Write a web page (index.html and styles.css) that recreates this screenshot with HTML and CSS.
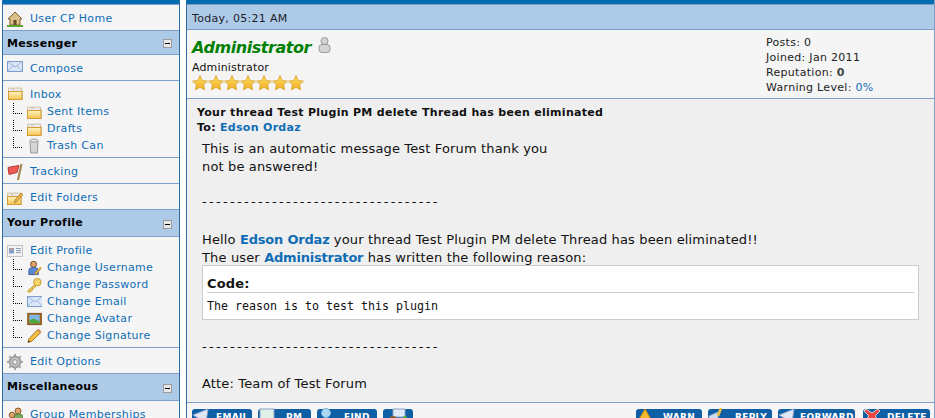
FILE: index.html
```html
<!DOCTYPE html>
<html lang="en">
<head>
<meta charset="utf-8">
<title>Private Message</title>
<link rel="stylesheet" href="styles.css">
</head>
<body>
<svg class="defs" width="0" height="0" aria-hidden="true">
  <defs>
    <linearGradient id="fg" x1="0" y1="0" x2="0" y2="1"><stop offset="0" stop-color="#fdf3c4"/><stop offset="1" stop-color="#f5c54e"/></linearGradient>
    <linearGradient id="sg" x1="0" y1="0" x2="0" y2="1"><stop offset="0" stop-color="#fbdc66"/><stop offset="1" stop-color="#eeb021"/></linearGradient>
    <symbol id="folder" viewBox="0 0 15 13">
      <path d="M.5 1.500v11h14v-9h-1v-2.500h-8v1.500h-1v-1.500h-4z" fill="#e9e9e9" stroke="#c6b68c" stroke-width=".7"/>
      <rect x=".5" y="4.500" width="13.500" height="8" fill="url(#fg)" stroke="#d59c35"/>
    </symbol>
    <symbol id="mail" viewBox="0 0 16 11">
      <rect x=".5" y=".5" width="15" height="10" fill="#dbe7f8" stroke="#7d9cc9"/>
      <path d="M.5.500l7.500 5.500 7.500-5.500M.5 10.500l5.500-6M15.500 10.500l-5.500-6" fill="none" stroke="#9db6dc"/>
    </symbol>
    <symbol id="star" viewBox="0 0 16 16">
      <path d="M8 .5l2.300 5 5.200.6-3.900 3.600 1.100 5.300-4.700-2.700-4.700 2.700 1.100-5.300-3.900-3.600 5.200-.6z" fill="url(#sg)" stroke="#d9a52e" stroke-width=".8"/>
    </symbol>
  </defs>
</svg>
<div class="page">
  <nav class="side">
    <div class="capbar"></div>
    <div class="group">
      <a class="row"><svg class="ico" viewBox="0 0 16 16"><path d="M1 8l7-7 7 7h-2v6h-10v-6z" fill="#d9c08a" stroke="#8a5a2b"/><path d="M6.500 9h3v5h-3z" fill="#6b4a26"/><path d="M0 14h16v2h-16z" fill="#5da33c"/></svg>User CP Home</a>
    </div>
    <h2 class="head">Messenger<span class="toggle"></span></h2>
    <div class="group"><a class="row"><svg class="ico"><use href="#mail" width="16" height="11" y="0"/></svg>Compose</a></div>
    <div class="group tree">
      <a class="row"><svg class="ico"><use href="#folder" width="15" height="13" x="1" y="0"/></svg>Inbox</a>
      <a class="sub"><span class="dots"></span><svg class="ico"><use href="#folder" width="15" height="13" y="2"/></svg>Sent Items</a>
      <a class="sub"><span class="dots"></span><svg class="ico"><use href="#folder" width="15" height="13" y="2"/></svg>Drafts</a>
      <a class="sub"><span class="dots"></span><svg class="ico" viewBox="0 0 15 16"><path d="M3 2.500h8l-.6 12.500h-6.800z" fill="#d5d5d5" stroke="#9a9a9a"/><ellipse cx="7" cy="2.500" rx="4" ry="1.500" fill="#eee" stroke="#9a9a9a"/></svg>Trash Can</a>
    </div>
    <div class="group"><a class="row"><svg class="ico" viewBox="0 0 16 16"><path d="M1 3.500l5-1 6-1-2 7-8 2z" fill="#ee5a55" stroke="#b53a36"/><path d="M14.500 0l-3.500 16" stroke="#a8834c" stroke-width="2"/></svg>Tracking</a></div>
    <div class="group"><a class="row"><svg class="ico" viewBox="0 0 16 16"><use href="#folder" width="15" height="13" y="2"/><path d="M7 13l1-3 6-7 2 1.500-6 7z" fill="#e9b53f" stroke="#a9762a" stroke-width=".7"/></svg>Edit Folders</a></div>
    <h2 class="head tall">Your Profile<span class="toggle"></span></h2>
    <div class="group tree">
      <a class="row"><svg class="ico" viewBox="0 0 16 16"><rect x=".5" y="2.500" width="15" height="11" fill="#f2f2f2" stroke="#c4c4c4"/><rect x="2" y="5" width="5" height="5.500" fill="#7f9fd6"/><circle cx="4.500" cy="6.500" r="1.300" fill="#d99a66"/><path d="M9 5.500h5M9 7.500h5M9 9.500h5" stroke="#8b9fbd"/></svg>Edit Profile</a>
      <a class="sub"><span class="dots"></span><svg class="ico" viewBox="0 0 16 16"><circle cx="7" cy="4" r="3.200" fill="#e2a56f" stroke="#6d3f1c"/><path d="M2 15v-4.500q0-3 5-3t5 3v4.500z" fill="#5a8ad0" stroke="#345d9c"/><path d="M8 14l6-7 1.500 1.200-6 7z" fill="#f0c040" stroke="#a9762a" stroke-width=".6"/></svg>Change Username</a>
      <a class="sub"><span class="dots"></span><svg class="ico" viewBox="0 0 16 16"><circle cx="11" cy="5" r="4" fill="#f6d567" stroke="#c39a2c"/><path d="M8 8l-7 6v1.500h3v-2h2v-2h1.500l2-2.500z" fill="#f3cd57" stroke="#c39a2c"/></svg>Change Password</a>
      <a class="sub"><span class="dots"></span><svg class="ico"><use href="#mail" width="16" height="11" y="2"/></svg>Change Email</a>
      <a class="sub"><span class="dots"></span><svg class="ico" viewBox="0 0 16 16"><rect x=".8" y="2" width="14.500" height="12" fill="#a56a22" stroke="#7d4e14"/><rect x="2.500" y="3.500" width="11" height="9" fill="#7fb7e6"/><path d="M2.500 12.500v-3l4-2 7 3v2z" fill="#4fa83e"/></svg>Change Avatar</a>
      <a class="sub"><span class="dots"></span><svg class="ico" viewBox="0 0 16 16"><path d="M1 15l1-4 9-9.500 3.500 3-9.500 9z" fill="#f2c23f" stroke="#a3702a"/><path d="M1 15l.7-2.600 1.900 1.700z" fill="#5b3c1e"/><path d="M11 1.500l3.500 3 1-1.200-3.300-3z" fill="#e6806a"/></svg>Change Signature</a>
    </div>
    <div class="group"><a class="row"><svg class="ico" viewBox="0 0 16 16"><circle cx="8" cy="8" r="5.500" fill="#c4c4c4" stroke="#939393" stroke-width="1.500"/><circle cx="8" cy="8" r="2.300" fill="#f2f2f2" stroke="#8a8a8a"/><path d="M8 0v3M8 13v3M0 8h3M13 8h3M2.300 2.300l2.100 2.100M11.600 11.600l2.100 2.100M2.300 13.700l2.100-2.100M11.600 4.400l2.100-2.100" stroke="#a3a3a3" stroke-width="2"/></svg>Edit Options</a></div>
    <h2 class="head tall">Miscellaneous<span class="toggle"></span></h2>
    <div class="group"><a class="row"><svg class="ico" viewBox="0 0 16 16"><circle cx="11" cy="4" r="3" fill="#e2a56f" stroke="#8a5a2b"/><path d="M6 13v-3q0-3 5-3t5 3v3z" fill="#79a860" stroke="#4e7a39"/><circle cx="5" cy="8" r="2.800" fill="#e2a56f" stroke="#8a5a2b"/><path d="M0 16v-1q0-4 5-4t5 4v1z" fill="#b06a5a"/></svg>Group Memberships</a></div>
  </nav>

  <main class="main">
    <div class="capbar"></div>
    <div class="date">Today, 05:21 AM</div>
    <header class="author">
      <div class="who">
        <div class="name">Administrator<svg class="status" viewBox="0 0 13 16"><circle cx="6.500" cy="4" r="3.500" fill="#d4d4d4" stroke="#999"/><rect x="1" y="7.500" width="11" height="8" rx="3" fill="#d4d4d4" stroke="#999"/></svg></div>
        <div class="title">Administrator</div>
        <div class="stars">
          <svg><use href="#star" width="16" height="16"/></svg>
          <svg><use href="#star" width="16" height="16"/></svg>
          <svg><use href="#star" width="16" height="16"/></svg>
          <svg><use href="#star" width="16" height="16"/></svg>
          <svg><use href="#star" width="16" height="16"/></svg>
          <svg><use href="#star" width="16" height="16"/></svg>
          <svg><use href="#star" width="16" height="16"/></svg>
        </div>
      </div>
      <div class="stats">
        <div>Posts: 0</div>
        <div>Joined: Jan 2011</div>
        <div>Reputation: <b>0</b></div>
        <div>Warning Level: <a>0%</a></div>
      </div>
    </header>
    <section class="message">
      <div class="subject">Your thread Test Plugin PM delete Thread has been eliminated</div>
      <div class="subject">To: <a>Edson Ordaz</a></div>
      <div class="body">
        <p>This is an automatic message Test Forum thank you<br>not be answered!</p>
        <p class="rule">----------------------------------</p>
        <p class="hello">Hello <a>Edson Ordaz</a> your thread Test Plugin PM delete Thread has been eliminated!!<br>The user <a>Administrator</a> has written the following reason:</p>
        <div class="code">
          <div class="codehead">Code:</div>
          <code>The reason is to test this plugin</code>
        </div>
        <p class="rule after">----------------------------------</p>
        <p class="atte">Atte: Team of Test Forum</p>
      </div>
    </section>
    <footer class="actions">
      <div class="btns">
        <a class="btn b-email"><svg viewBox="0 0 18 16"><path d="M1 7l15-6-2 14z" fill="#dfe6f5" stroke="#8ea3c9"/></svg>EMAIL</a>
        <a class="btn b-pm"><svg viewBox="0 0 18 16"><rect x="2" y="1" width="14" height="14" fill="#dff0e8" stroke="#8ea3c9"/></svg>PM</a>
        <a class="btn b-find"><svg viewBox="0 0 18 16"><circle cx="9" cy="5" r="4.500" fill="#a9d8f2" stroke="#7cb2d6"/></svg>FIND</a>
        <a class="btn b-add"><svg viewBox="0 0 22 16"><path d="M6 1h12v8h-12z" fill="#dfeaf7" stroke="#8ea3c9"/><circle cx="6" cy="12" r="4" fill="#8a5a2b"/><path d="M18 8v7M14.500 11.500h7" stroke="#4fb13c" stroke-width="3"/></svg></a>
      </div>
      <div class="btns">
        <a class="btn b-warn"><svg viewBox="0 0 18 16"><path d="M9 1l8 14h-16z" fill="#f5b92c" stroke="#c98a17"/></svg>WARN</a>
        <a class="btn b-reply"><svg viewBox="0 0 18 16"><path d="M1 8l9-4v11h-9z" fill="#cfe0f4" stroke="#8ea3c9"/><path d="M13 0l-3 8" stroke="#f0c040" stroke-width="2.500"/></svg>REPLY</a>
        <a class="btn b-forward"><svg viewBox="0 0 18 16"><path d="M1 7l15-6-2 14z" fill="#dfe6f5" stroke="#8ea3c9"/></svg>FORWARD</a>
        <a class="btn b-delete"><svg viewBox="0 0 18 16"><path d="M3 1l6 4 6-4 2 2-5 5 5 5-2 2-6-5-6 5-2-2 5-5-5-5z" fill="#e8483f" stroke="#fff" stroke-width=".7"/></svg>DELETE</a>
      </div>
    </footer>
  </main>
</div>
</body>
</html>
```
FILE: styles.css
```css
* { box-sizing: border-box; }
html, body { margin: 0; height: 100%; overflow: hidden; background: #fff; }
body { font: 11px/17px "DejaVu Sans", Verdana, sans-serif; letter-spacing: .3px; color: #000; }
.defs { position: absolute; }
a { color: #0f6db5; text-decoration: none; }
.page { display: flex; height: 418px; padding-left: 2px; overflow: hidden; gap: 6px; }

.capbar { height: 5px; background: #026cb1; border-bottom: 1px solid #7d9fc9; flex: none; }

.side { width: 178px; flex: none; border-left: 1px solid #2f6aa3; border-right: 1px solid #2f6aa3; background: #f5f5f5; height: 440px; }
.group { border-bottom: 1px solid #7f9fc8; }
.group:last-child { border-bottom: 0; }
.row, .sub { display: flex; align-items: center; padding-left: 4px; }
.row { height: 25px; padding-top: 2px; }
.tree { padding-bottom: 3px; }
.tree .row { height: 22px; padding-top: 5px; }
.sub { height: 17px; }
.ico { width: 16px; height: 16px; margin-right: 7px; flex: none; }
.sub .ico { width: 15px; margin-right: 5px; }
.dots { width: 9px; height: 11px; margin: -6px 5px 0 6px; border-left: 1px dotted #000; border-bottom: 1px dotted #000; flex: none; }
.head { display: flex; justify-content: space-between; align-items: center; margin: 0; height: 24px; padding: 2px 7px 0 4px; font-size: 11px; font-weight: bold; background: #adcae7; border-bottom: 1px solid #7f9fc8; }
.head.tall { height: 27px; align-items: flex-start; padding-top: 4px; }
.toggle { width: 9px; height: 9px; background: linear-gradient(#000,#000) center/5px 1px no-repeat #e8e8e8; border: 1px solid #9a9a9a; flex: none; }
.head.tall .toggle { margin-top: 6px; }

.main { width: 749px; flex: none; border-left: 1px solid #2f6aa3; border-right: 1px solid #7f9fc8; display: flex; flex-direction: column; height: 418px; background: #efefef; }
.date { height: 25px; flex: none; padding: 5px 5px 0; background: #adcae7; border-bottom: 1px solid #7f9fc8; color: #1d1d2b; }
.author { height: 69px; flex: none; background: #f5f5f5; border-bottom: 1px solid #7f9fc8; display: flex; justify-content: space-between; padding: 0 0 0 5px; }
.name { font: italic bold 16px/24px "DejaVu Sans", Verdana, sans-serif; letter-spacing: -.45px; color: #008000; display: flex; align-items: flex-start; margin-top: 6px; }
.status { width: 13px; height: 16px; margin: 1px 0 0 7px; }
.title { line-height: 15px; margin-top: 0; color: #111; letter-spacing: .15px; }
.stars { display: flex; height: 16px; }
.stars svg { width: 16px; height: 16px; }
.stats { width: 168px; line-height: 15px; padding-top: 5px; color: #222; }
.stats b { color: #444; }

.message { flex: 1; padding: 6px 10px 0; overflow: hidden; }
.subject { font-weight: bold; line-height: 15px; color: #111; }
.body { font-size: 13px; letter-spacing: .15px; line-height: 18px; padding: 5px 5px 0; color: #111; }
.body p { margin: 0; }
.body a { font-weight: bold; letter-spacing: -.2px; }
.body .rule { margin-top: 17px; letter-spacing: 2.300px; }
.body .hello { margin-top: 20px; }
.code { background: #fff; border: 1px solid #ccc; margin-top: -2px; padding: 4px; height: 55px; }
.codehead { font-size: 13px; font-weight: bold; line-height: 16px; border-bottom: 1px solid #ccc; padding-top: 6px; height: 23px; }
.code code { display: block; font: 11.630px/18px "DejaVu Sans Mono", monospace; letter-spacing: 0; margin-top: 4px; }
.body .rule.after { margin-top: 18px; }
.body .atte { margin-top: 19px; }

.actions { height: 16px; flex: none; border-top: 1px solid #7f9fc8; background: #f5f5f5; display: flex; justify-content: space-between; padding: 6px 4px 0 5px; overflow: hidden; }
.btns { display: flex; gap: 6px; }
.btn { display: flex; align-items: flex-start; height: 20px; padding-top: 2px; border-radius: 3px 3px 0 0; background: #0f5fa5; color: #fff; font-size: 9px; font-weight: bold; line-height: 12px; letter-spacing: .3px; }
.btn svg { width: 18px; height: 16px; margin-top: -3px; flex: none; }
.b-email { width: 60px; gap: 6px; }
.b-pm { width: 53px; gap: 10px; }
.b-find { width: 60px; gap: 9px; }
.b-add { width: 30px; justify-content: center; }
.b-add svg { width: 22px; }
.b-warn { width: 66px; gap: 9px; }
.b-reply { width: 64px; gap: 9px; }
.b-forward { width: 77px; gap: 4px; margin-right: 2px; }
.b-delete { width: 67px; gap: 6px; }
```
